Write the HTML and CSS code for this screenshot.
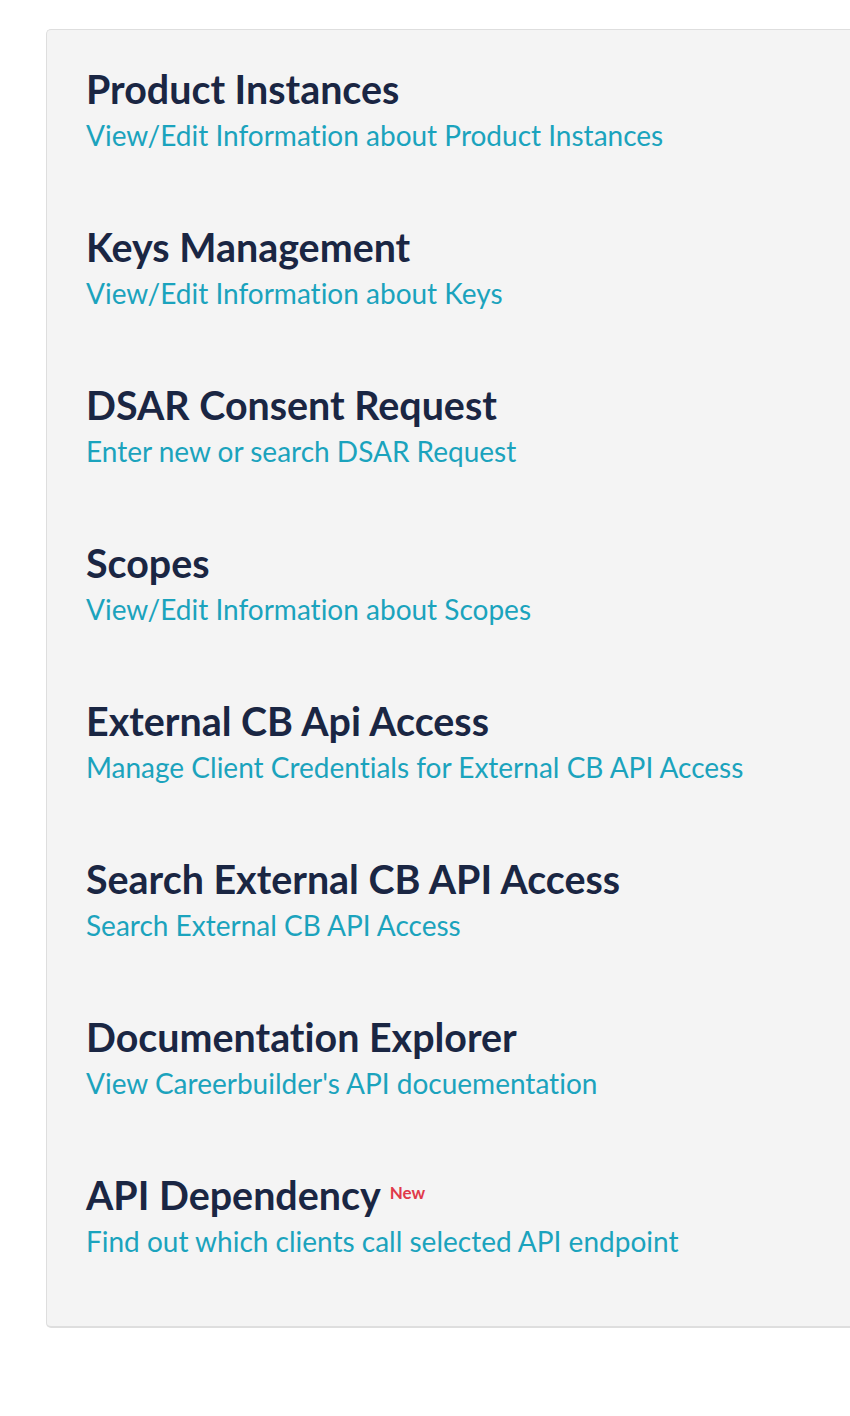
FILE: index.html
```html
<!DOCTYPE html>
<html>
<head>
<meta charset="utf-8">
<link rel="stylesheet" href="styles.css">
</head>
<body>
<div class="panel">
  <div class="item"><div class="title">Product Instances</div><a class="sub">View/Edit Information about Product Instances</a></div>
  <div class="item"><div class="title">Keys Management</div><a class="sub">View/Edit Information about Keys</a></div>
  <div class="item"><div class="title">DSAR Consent Request</div><a class="sub">Enter new or search DSAR Request</a></div>
  <div class="item"><div class="title">Scopes</div><a class="sub">View/Edit Information about Scopes</a></div>
  <div class="item"><div class="title">External CB Api Access</div><a class="sub">Manage Client Credentials for External CB API Access</a></div>
  <div class="item"><div class="title">Search External CB API Access</div><a class="sub">Search External CB API Access</a></div>
  <div class="item"><div class="title">Documentation Explorer</div><a class="sub">View Careerbuilder's API docuementation</a></div>
  <div class="item"><div class="title">API Dependency<span class="new">New</span></div><a class="sub">Find out which clients call selected API endpoint</a></div>
</div>
</body>
</html>
```
FILE: styles.css
```css
html, body {
  margin: 0;
  padding: 0;
  background: #ffffff;
  overflow: hidden;
}
body {
  font-family: Lato, "Noto Sans", sans-serif;
  font-variant-ligatures: none;
  width: 850px;
  height: 1416px;
}
.panel {
  margin-top: 29px;
  margin-left: 46px;
  width: 804px;
  box-sizing: border-box;
  background: #f4f4f4;
  border: 1px solid #dedede;
  border-bottom-width: 2px;
  border-right: none;
  border-radius: 5px 0 0 5px;
  padding: 37px 0 68px 39px;
  display: flex;
  flex-direction: column;
  gap: 73px;
}
.item {
  display: flex;
  flex-direction: column;
}
.title {
  font-size: 39.4px;
  font-weight: 700;
  color: #1a2643;
  line-height: 44px;
}
.sub {
  font-size: 28px;
  color: #1ba3bd;
  line-height: 34px;
  margin-top: 7px;
}
.new {
  font-size: 17px;
  color: #e03a4a;
  font-weight: 700;
  margin-left: 9px;
  vertical-align: 11px;
  line-height: 1;
}
```
